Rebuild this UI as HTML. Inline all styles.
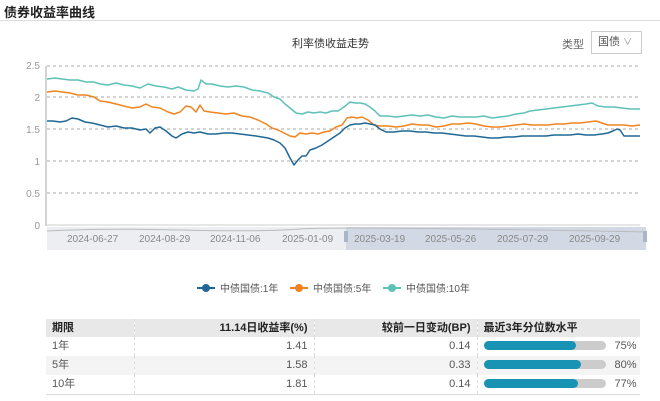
<!DOCTYPE html><html><head><meta charset="utf-8"><style>
body{margin:0;width:660px;height:401px;background:#fff;font-family:"Liberation Sans","Noto Sans CJK SC",sans-serif;position:relative;overflow:hidden;color:#333}
.a{position:absolute}
table{position:absolute;left:46px;top:319px;width:594px;border-collapse:collapse;font-size:11px;color:#555;table-layout:fixed}
td{height:19px;line-height:19px;padding:0 6px;border-left:1px dashed #ddd;white-space:nowrap;overflow:hidden}
td:first-child{border-left:none}
tr.h td{background:#e8e8e8;color:#222;font-weight:bold;height:18px;line-height:18px}
tr.g td{background:#f4f4f4}
tr:last-child td{border-bottom:1px solid #ddd}
.r{text-align:right}
.bar{display:inline-block;vertical-align:middle;width:122px;height:9px;border-radius:5px;background:#ccc;position:relative;margin-right:9px;margin-top:-2px}
.bar i{position:absolute;left:0;top:0;bottom:0;border-radius:5px;background:#1893b3}
</style></head><body>
<div class="a" style="left:4px;top:2px;font-size:13px;font-weight:bold;color:#222">债券收益率曲线</div>
<div class="a" style="left:0;top:20px;width:660px;height:1px;background:#ddd"></div>
<div class="a" style="left:292px;top:35px;font-size:11px;color:#333">利率债收益走势</div>
<div class="a" style="left:562px;top:36px;font-size:11px;color:#666">类型</div>
<div class="a" style="left:591px;top:31px;width:49px;height:21px;border:1px solid #ccc;font-size:11px;color:#555;line-height:21px;text-indent:6px">国债 <span style="font-size:9px;color:#888">∨</span></div>
<svg class="a" style="left:0;top:0" width="660" height="260" font-family="Liberation Sans" font-size="10" fill="#999">
<g stroke="#aaa" stroke-dasharray="3,3"><line x1="47" x2="640" y1="66" y2="66"/><line x1="47" x2="640" y1="97" y2="97"/><line x1="47" x2="640" y1="129" y2="129"/><line x1="47" x2="640" y1="161" y2="161"/><line x1="47" x2="640" y1="193" y2="193"/></g>
<line x1="46" x2="46" y1="66" y2="226" stroke="#aaa"/><line x1="46" x2="640" y1="225" y2="225" stroke="#ccc"/>
<g text-anchor="end"><text x="40" y="69">2.5</text><text x="40" y="101">2</text><text x="40" y="133">1.5</text><text x="40" y="165">1</text><text x="40" y="197">0.5</text><text x="40" y="229">0</text></g>
<rect x="47" y="227" width="299" height="23" fill="#eceef1"/><rect x="346" y="227" width="300" height="23" fill="#d3d9e4"/>
<path d="M47 231 Q100 228 180 230 T300 229 T646 232" stroke="#bbb" fill="none"/>
<rect x="344" y="231" width="4" height="11" fill="#a9b5c9"/><rect x="643" y="231" width="4" height="11" fill="#a9b5c9"/>
<g fill="#888"><text x="67" y="242">2024-06-27</text><text x="139" y="242">2024-08-29</text><text x="210" y="242">2024-11-06</text><text x="282" y="242">2025-01-09</text><text x="354" y="242">2025-03-19</text><text x="425" y="242">2025-05-26</text><text x="497" y="242">2025-07-29</text><text x="569" y="242">2025-09-29</text></g>
<g fill="none" stroke-width="1.5" stroke-linejoin="round">
<polyline stroke="#5ec1b9" points="47,79 55,78 62,79 70,80 78,80 86,82 94,82 100,84 108,85 116,83 124,85 132,86 140,88 148,84 156,86 164,87 172,89 178,87 186,90 194,91 198,89 201,80 206,84 212,84 220,86 228,87 236,86 244,87 252,90 260,91 268,93 274,97 280,99 285,104 290,108 296,113 302,114 308,112 314,113 320,112 326,113 332,111 338,111 344,107 350,102 355,103 360,103 365,104 370,107 375,111 380,116 388,116 396,117 404,116 412,115 420,116 428,115 436,117 444,118 452,116 460,117 468,117 476,117 484,116 492,118 500,117 508,116 516,114 524,113 530,111 538,110 546,109 554,108 562,107 570,106 578,105 586,104 592,103 598,106 606,107 614,107 622,108 630,109 640,109"/>
<polyline stroke="#f0841e" points="47,92 55,91 62,92 70,93 78,95 86,95 94,97 100,101 108,102 116,104 124,106 132,108 140,107 146,104 152,107 160,108 168,112 174,114 180,112 186,106 191,107 196,112 200,105 204,111 210,112 218,113 226,114 234,113 242,116 250,117 258,120 266,124 272,128 278,130 284,133 290,136 295,137 300,133 306,134 312,133 318,134 324,132 330,131 336,127 342,125 347,118 352,117 357,118 362,117 368,120 374,125 380,126 388,126 396,127 404,126 412,124 420,125 428,125 436,127 444,126 452,124 460,124 468,123 476,124 484,126 492,127 500,127 508,126 516,125 524,124 532,125 540,125 548,125 556,124 564,124 572,123 580,123 588,122 596,121 602,123 608,125 616,125 624,125 632,126 640,125"/>
<polyline stroke="#1f6895" points="47,121 53,121 60,122 66,121 72,118 78,119 85,122 92,123 100,125 108,127 116,126 124,128 132,128 140,130 146,129 150,133 155,128 160,127 166,131 172,136 176,138 182,134 188,132 194,133 200,132 208,134 216,134 224,133 232,133 240,134 248,135 256,136 262,137 268,138 274,140 280,143 285,148 290,158 294,165 298,160 302,156 306,156 310,150 316,148 322,145 328,141 334,137 340,133 345,128 350,125 355,124 360,124 365,123 370,124 375,125 380,129 386,132 394,132 402,131 410,131 418,132 426,132 434,133 442,133 450,134 458,135 466,136 474,136 482,137 490,138 498,138 506,137 514,137 522,136 530,136 538,136 546,136 554,135 562,135 570,135 578,134 586,135 594,135 602,134 608,133 613,131 617,129 620,130 624,136 630,136 640,136"/>
</g>
</svg>
<svg class="a" style="left:195px;top:281px" width="300" height="16" font-family="Liberation Sans,Noto Sans CJK SC" font-size="10" fill="#555">
<line x1="2" x2="20" y1="7" y2="7" stroke="#1f6895" stroke-width="2"/><circle cx="11" cy="7" r="4" fill="#1f6895"/><text x="25" y="11">中债国债:1年</text>
<line x1="95" x2="113" y1="7" y2="7" stroke="#f0841e" stroke-width="2"/><circle cx="104" cy="7" r="4" fill="#f0841e"/><text x="118" y="11">中债国债:5年</text>
<line x1="188" x2="206" y1="7" y2="7" stroke="#5ec1b9" stroke-width="2"/><circle cx="197" cy="7" r="4" fill="#5ec1b9"/><text x="211" y="11">中债国债:10年</text>
</svg>
<table>
<col style="width:88px"><col style="width:180px"><col style="width:163px"><col>
<tr class="h"><td>期限</td><td class="r">11.14日收益率(%)</td><td class="r">较前一日变动(BP)</td><td>最近3年分位数水平</td></tr>
<tr><td>1年</td><td class="r">1.41</td><td class="r">0.14</td><td><span class="bar"><i style="width:92px"></i></span>75%</td></tr>
<tr class="g"><td>5年</td><td class="r">1.58</td><td class="r">0.33</td><td><span class="bar"><i style="width:97px"></i></span>80%</td></tr>
<tr><td>10年</td><td class="r">1.81</td><td class="r">0.14</td><td><span class="bar"><i style="width:94px"></i></span>77%</td></tr>
</table>
</body></html>
